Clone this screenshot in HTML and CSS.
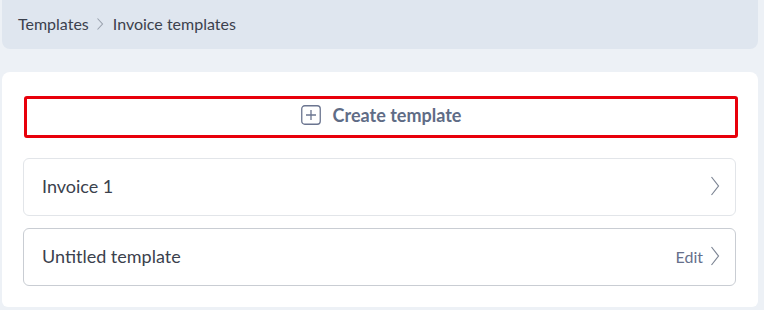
FILE: index.html
```html
<!DOCTYPE html>
<html lang="en">
<head>
    <meta charset="UTF-8">
    <meta name="viewport" content="width=device-width, initial-scale=1.0">
    <title>Invoice templates</title>
    <link rel="stylesheet" href="styles.css">
</head>
<body>
    <nav class="breadcrumb">
        <a href="#">Templates</a>
        <svg class="crumb-sep" width="8" height="14" viewBox="0 0 8 14"><path d="M1.5 1.5 L6.5 7 L1.5 12.5" fill="none" stroke="#9aa1ad" stroke-width="1.1"/></svg>
        <span>Invoice templates</span>
    </nav>

    <div class="panel">
        <button class="create highlight">
            <svg width="20" height="20" viewBox="0 0 20 20"><rect x="0.75" y="0.75" width="18.5" height="18.5" rx="3" fill="none" stroke="#6b7590" stroke-width="1.3"/><path d="M10 5 V15 M5 10 H15" stroke="#6b7590" stroke-width="1.3"/></svg>
            Create template
        </button>

        <div class="row">
            <span class="name">Invoice 1</span>
            <span class="actions">
                <svg class="chev" width="10" height="20" viewBox="0 0 10 20"><path d="M1.5 1 L8.5 10 L1.5 19" fill="none" stroke="#7d8594" stroke-width="1.2"/></svg>
            </span>
        </div>

        <div class="row active">
            <span class="name">Untitled template</span>
            <span class="actions">
                <span class="edit">Edit</span>
                <svg class="chev" width="10" height="20" viewBox="0 0 10 20"><path d="M1.5 1 L8.5 10 L1.5 19" fill="none" stroke="#7d8594" stroke-width="1.2"/></svg>
            </span>
        </div>
    </div>
</body>
</html>
```

FILE: styles.css
```css
:root {
    --page-bg: #edf1f6;
    --crumb-bg: #dfe6ef;
    --text: #3b414d;
    --muted: #5f6c86;
    --border: #e2e5e9;
    --border-active: #c9cdd3;
}

body {
    margin: 0;
    padding: 0 6px 0 2px;
    background-color: var(--page-bg);
    font-family: Lato, "Open Sans", sans-serif;
    color: var(--text);
}

.breadcrumb {
    display: flex;
    align-items: center;
    gap: 7px;
    height: 49px;
    padding: 0 16px 3px;
    box-sizing: border-box;
    background-color: var(--crumb-bg);
    border-radius: 0 0 8px 8px;
    font-size: 16px;
}

.breadcrumb a {
    color: var(--text);
    text-decoration: none;
}

.crumb-sep {
    margin: 1px 2px 0 0;
}

.panel {
    margin-top: 23px;
    padding: 24px 20px 21px 22px;
    background-color: #fff;
    border-radius: 8px 8px 6px 6px;
}

.create {
    display: flex;
    align-items: center;
    justify-content: center;
    gap: 12px;
    width: 100%;
    height: 42px;
    margin: 0 0 20px;
    padding: 0 0 5px;
    background: #fff;
    border: 1px dashed #dcdfe4;
    border-radius: 3px;
    font-family: inherit;
    font-size: 18px;
    font-weight: 700;
    color: var(--muted);
    cursor: pointer;
}

.highlight {
    outline: 3px solid #e8000b;
    outline-offset: -3px;
}

.row {
    display: flex;
    align-items: center;
    justify-content: space-between;
    height: 58px;
    box-sizing: border-box;
    margin-left: -1px;
    margin-right: 2px;
    margin-bottom: 12px;
    padding: 0 15px 2px 18px;
    border: 1px solid var(--border);
    border-radius: 6px;
    font-size: 18px;
}

.row:last-child {
    margin-bottom: 0;
}

.row.active {
    border-color: var(--border-active);
}

.actions {
    display: flex;
    align-items: center;
    gap: 7px;
}

.edit {
    color: #66708b;
    font-size: 16px;
}
```
